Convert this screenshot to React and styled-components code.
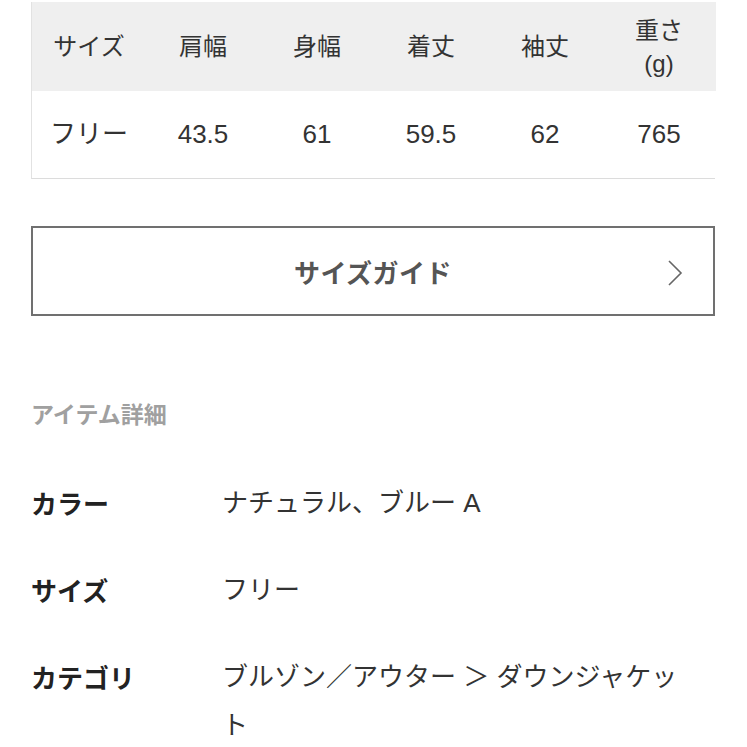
import React from 'react'
import styled, { createGlobalStyle } from 'styled-components'

const Global = createGlobalStyle`
  body {
    margin: 0;
    background: #fff;
    font-family: "Liberation Sans", "Noto Sans CJK JP", sans-serif;
    color: #333;
  }
`

const Page = styled.div`
  width: 684px;
  padding: 2px 0 0 31px;
`

const Table = styled.div`
  display: grid;
  grid-template-columns: repeat(6, 114px);
  border-left: 1px solid #e2e2e2;
  border-bottom: 1px solid #dcdcdc;
`

const Cell = styled.div`
  display: flex;
  align-items: center;
  justify-content: center;
  text-align: center;
  height: ${p => (p.$head ? '89px' : '87px')};
  background: ${p => (p.$head ? '#efefef' : '#fff')};
  font-size: ${p => (p.$head ? '24px' : '26px')};
  line-height: 33px;
  color: #333;
`

const GuideButton = styled.div`
  position: relative;
  margin-top: 47px;
  height: 86px;
  border: 2px solid #707070;
  display: flex;
  align-items: center;
  justify-content: center;
  font-family: "Noto Sans CJK JP", sans-serif;
  font-weight: 700;
  font-size: 26px;
  letter-spacing: 0.5px;
  color: #555;
`

const Chevron = styled.svg`
  position: absolute;
  right: 29px;
  top: 32px;
`

const SectionTitle = styled.div`
  margin-top: 82px;
  font-family: "Noto Sans CJK JP", sans-serif;
  font-weight: 700;
  font-size: 23px;
  line-height: 30px;
  color: #a0a0a0;
`

const Details = styled.div`
  margin-top: 51px;
  display: grid;
  grid-template-columns: 191px 470px;
  row-gap: 39px;
  font-size: 26px;
  line-height: 48px;
`

const Label = styled.div`
  font-family: "Noto Sans CJK JP", sans-serif;
  font-weight: 700;
  color: #222;
`

const Value = styled.div`
  color: #333;
`

const heads = ['サイズ', '肩幅', '身幅', '着丈', '袖丈', '重さ\n(g)']
const values = ['フリー', '43.5', '61', '59.5', '62', '765']

const details = [
  ['カラー', 'ナチュラル、ブルー A'],
  ['サイズ', 'フリー'],
  ['カテゴリ', 'ブルゾン／アウター ＞ ダウンジャケット'],
]

export default function App() {
  return (
    <Page>
      <Global />
      <Table>
        {heads.map(h => (
          <Cell $head key={h}>
            <span>
              {h.split('\n').map((l, i) => (
                <div key={i}>{l}</div>
              ))}
            </span>
          </Cell>
        ))}
        {values.map(v => (
          <Cell key={v}>{v}</Cell>
        ))}
      </Table>
      <GuideButton>
        サイズガイド
        <Chevron width="18" height="26" viewBox="0 0 18 26">
          <path d="M3 1 L15 13 L3 25" fill="none" stroke="#666" strokeWidth="1.6" />
        </Chevron>
      </GuideButton>
      <SectionTitle>アイテム詳細</SectionTitle>
      <Details>
        {details.map(([l, v]) => (
          <React.Fragment key={l}>
            <Label>{l}</Label>
            <Value>{v}</Value>
          </React.Fragment>
        ))}
      </Details>
    </Page>
  )
}
